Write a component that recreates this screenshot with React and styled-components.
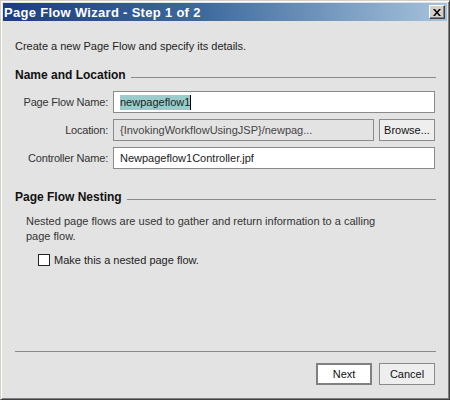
import React from "react";
import styled, { createGlobalStyle } from "styled-components";

const GlobalStyle = createGlobalStyle`
  html, body {
    margin: 0;
    padding: 0;
    background: #e3e3e3;
  }
  * {
    box-sizing: border-box;
  }
`;

const Window = styled.div`
  width: 450px;
  height: 400px;
  display: flex;
  flex-direction: column;
  background: #e3e3e3;
  border: 1px solid;
  border-color: #d4d0c8 #404040 #404040 #d4d0c8;
  box-shadow: inset 1px 1px #ffffff, inset -1px -1px #808080;
  padding: 2px;
  font-family: "Liberation Sans", Arial, sans-serif;
  font-size: 11px;
  color: #222;
`;

const TitleBar = styled.div`
  height: 18px;
  display: flex;
  align-items: center;
  justify-content: space-between;
  padding: 0 2px 0 1px;
  background: linear-gradient(to right, #1e3b86 0%, #3d6a9e 45%, #a7c3dc 100%);
`;

const Title = styled.span`
  color: #ffffff;
  font-weight: bold;
  font-size: 13px;
  letter-spacing: 0.3px;
`;

const CloseButton = styled.div`
  width: 16px;
  height: 14px;
  display: flex;
  align-items: center;
  justify-content: center;
  background: #d4d0c8;
  border: 1px solid;
  border-color: #ffffff #404040 #404040 #ffffff;
  box-shadow: inset -1px -1px #808080;
`;

const Body = styled.div`
  flex: 1;
  display: flex;
  flex-direction: column;
  padding: 19px 11px 12px 12px;
`;

const Intro = styled.div`
  line-height: 13px;
`;

const SectionHeader = styled.div`
  display: flex;
  align-items: center;
  gap: 5px;
  margin-top: ${(p) => p.$top}px;
  font-weight: bold;
  font-size: 12px;
  color: #111;
  line-height: 14px;
  &::after {
    content: "";
    flex: 1;
    height: 1px;
    background: #8a8a8a;
    margin-top: 4px;
  }
`;

const Form = styled.div`
  display: grid;
  grid-template-columns: 93px 1fr auto;
  column-gap: 5px;
  row-gap: 6px;
  margin-top: 9px;
  margin-right: 1px;
  align-items: center;
`;

const Label = styled.div`
  text-align: right;
  color: #333;
  letter-spacing: -0.2px;
`;

const Field = styled.div`
  height: 22px;
  display: flex;
  align-items: center;
  padding: 0 6px;
  border: 1px solid #8a8a8a;
  background: ${(p) => (p.$disabled ? "#e3e3e3" : "#ffffff")};
  color: ${(p) => (p.$disabled ? "#444" : "#222")};
  grid-column: ${(p) => (p.$wide ? "2 / 4" : "auto")};
  white-space: nowrap;
  overflow: hidden;
`;

const Selected = styled.span`
  background: #9bcccc;
  line-height: 15px;
`;

const Caret = styled.span`
  display: inline-block;
  width: 1px;
  height: 15px;
  background: #000;
`;

const Button = styled.div`
  height: 22px;
  display: flex;
  align-items: center;
  justify-content: center;
  width: ${(p) => p.$width}px;
  background: ${(p) => (p.$default ? "#ffffff" : "#eeeeee")};
  border: ${(p) => (p.$default ? "2px solid #808080" : "1px solid #8a8a8a")};
  color: #111;
`;

const Description = styled.div`
  margin-top: 10px;
  padding-left: 11px;
  line-height: 15px;
  color: #333;
  width: 370px;
`;

const CheckRow = styled.label`
  display: flex;
  align-items: center;
  gap: 4px;
  margin-top: 10px;
  padding-left: 23px;
  color: #222;
`;

const CheckBox = styled.span`
  width: 12px;
  height: 12px;
  border: 1px solid #222;
  background: #ffffff;
`;

const Spacer = styled.div`
  flex: 1;
`;

const Separator = styled.div`
  height: 1px;
  background: #8a8a8a;
`;

const Footer = styled.div`
  display: flex;
  justify-content: flex-end;
  gap: 7px;
  margin-top: 11px;
  padding-right: 1px;
`;

export default function App() {
  return (
    <>
      <GlobalStyle />
      <Window>
        <TitleBar>
          <Title>Page Flow Wizard - Step 1 of 2</Title>
          <CloseButton>
            <svg width="8" height="7" viewBox="0 0 8 7">
              <path d="M0 0h2l2 2.5L6 0h2L5 3.5 8 7H6L4 4.5 2 7H0l3-3.5z" fill="#000" />
            </svg>
          </CloseButton>
        </TitleBar>
        <Body>
          <Intro>Create a new Page Flow and specify its details.</Intro>

          <SectionHeader $top={15}>Name and Location</SectionHeader>
          <Form>
            <Label>Page Flow Name:</Label>
            <Field $wide>
              <Selected>newpageflow1</Selected>
              <Caret />
            </Field>

            <Label>Location:</Label>
            <Field $disabled>{"{InvokingWorkflowUsingJSP}/newpag..."}</Field>
            <Button $width={56}>Browse...</Button>

            <Label>Controller Name:</Label>
            <Field $wide>Newpageflow1Controller.jpf</Field>
          </Form>

          <SectionHeader $top={21}>Page Flow Nesting</SectionHeader>
          <Description>
            Nested page flows are used to gather and return information to a calling page flow.
          </Description>
          <CheckRow>
            <CheckBox />
            Make this a nested page flow.
          </CheckRow>

          <Spacer />
          <Separator />
          <Footer>
            <Button $width={56} $default>
              Next
            </Button>
            <Button $width={56}>Cancel</Button>
          </Footer>
        </Body>
      </Window>
    </>
  );
}
